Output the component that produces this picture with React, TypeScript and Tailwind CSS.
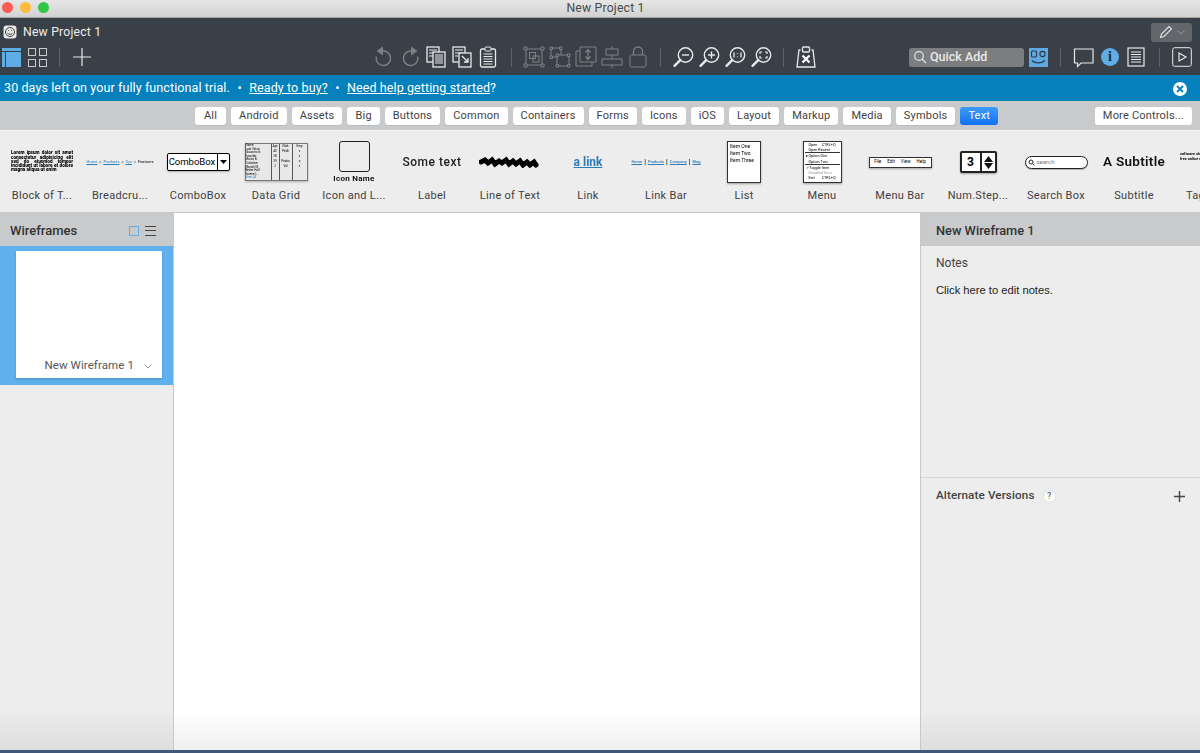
import React from 'react';

const filters = ['All', 'Android', 'Assets', 'Big', 'Buttons', 'Common', 'Containers', 'Forms', 'Icons', 'iOS', 'Layout', 'Markup', 'Media', 'Symbols', 'Text'];

function Svg({ children, w = 24, h = 24, className = '' }: { children: React.ReactNode; w?: number; h?: number; className?: string }) {
  return (
    <svg width={w} height={h} viewBox={`0 0 ${w} ${h}`} fill="none" className={className}>
      {children}
    </svg>
  );
}

const DIM = '#7d8185';
const LIT = '#e8e9ea';

function ToolIcon({ children }: { children: React.ReactNode }) {
  return <div className="w-[26px] h-[24px] flex items-center justify-center shrink-0">{children}</div>;
}

function Sep() {
  return <div className="w-px h-[19px] bg-[#5d6267] shrink-0" />;
}

function Magnifier({ children }: { children?: React.ReactNode }) {
  return (
    <Svg>
      <circle cx="14.5" cy="10" r="7.2" stroke={LIT} strokeWidth="1.4" />
      <path d="M9.2 15.2 3.5 20.8" stroke={LIT} strokeWidth="2.4" strokeLinecap="round" />
      {children}
    </Svg>
  );
}

function CenterTools() {
  return (
    <div className="flex items-center">
      <ToolIcon>
        <Svg>
          <path d="M9 6.5a7.2 7.2 0 1 1-4.6 5" stroke={DIM} strokeWidth="1.4" />
          <path d="M11 1.5v9L4.5 6z" fill={DIM} />
        </Svg>
      </ToolIcon>
      <ToolIcon>
        <Svg>
          <path d="M15 6.5a7.2 7.2 0 1 0 4.6 5" stroke={DIM} strokeWidth="1.4" />
          <path d="M13 1.5v9L19.5 6z" fill={DIM} />
        </Svg>
      </ToolIcon>
      <ToolIcon>
        <Svg>
          <rect x="3" y="2" width="12" height="15" fill="#3a4047" stroke={LIT} strokeWidth="1.3" />
          <path d="M5 5h8M5 8h8M5 11h8" stroke={LIT} />
          <rect x="9" y="7" width="12" height="15" fill="#3a4047" stroke={LIT} strokeWidth="1.3" />
          <path d="M11 10h8M11 12h8M11 14h8M11 16h8M11 18h8" stroke={LIT} />
        </Svg>
      </ToolIcon>
      <ToolIcon>
        <Svg>
          <rect x="3" y="2" width="12" height="15" fill="#3a4047" stroke={LIT} strokeWidth="1.3" />
          <path d="M5 5h8M5 8h8M5 11h3" stroke={LIT} />
          <rect x="9" y="8" width="12" height="14" fill="#3a4047" stroke={LIT} strokeWidth="1.3" />
          <path d="M12 11l6 6M18 13v4h-4" stroke={LIT} strokeWidth="1.3" />
        </Svg>
      </ToolIcon>
      <ToolIcon>
        <Svg>
          <rect x="4.5" y="4" width="15" height="18" rx="1.5" stroke={LIT} strokeWidth="1.3" />
          <rect x="9" y="2" width="6" height="4" rx="1" fill="#3a4047" stroke={LIT} />
          <path d="M7.5 9h9M7.5 11.5h9M7.5 14h9M7.5 16.500h9M7.5 19h9" stroke={LIT} />
        </Svg>
      </ToolIcon>
      <div className="w-[10px]" />
      <Sep />
      <div className="w-[9px]" />
      <ToolIcon>
        <Svg>
          <rect x="4" y="4" width="16" height="16" stroke={DIM} />
          <rect x="7.500" y="7.500" width="6" height="6" stroke={DIM} />
          <rect x="11" y="11" width="6" height="6" stroke={DIM} />
          <path d="M2 2h3v3H2zM19 2h3v3h-3zM2 19h3v3H2zM19 19h3v3h-3z" fill="#3a4047" stroke={DIM} />
        </Svg>
      </ToolIcon>
      <ToolIcon>
        <Svg>
          <rect x="3" y="3" width="10" height="9" stroke={DIM} />
          <rect x="9" y="10" width="12" height="11" fill="#3a4047" stroke={DIM} />
          <path d="M2 2h2.500v2.500H2zM11.500 2H14v2.500h-2.500zM2 11h2.500v2.500H2zM8 9h2.500v2.500H8zM19.500 9H22v2.500h-2.500zM8 19.500h2.500V22H8zM19.500 19.500H22V22h-2.500z" fill="#3a4047" stroke={DIM} />
        </Svg>
      </ToolIcon>
      <ToolIcon>
        <Svg>
          <path d="M6 2h16v15H6z" stroke={DIM} />
          <path d="M6 6H2v15h16v-4" stroke={DIM} />
          <path d="M14 5v9M11.500 7.500 14 4.500l2.500 3M11.500 11.500l2.500 3 2.500-3" stroke={DIM} strokeWidth="1.2" />
        </Svg>
      </ToolIcon>
      <ToolIcon>
        <Svg>
          <path d="M12 1v22" stroke={DIM} />
          <rect x="6" y="4" width="12" height="6" stroke={DIM} fill="#3a4047" />
          <rect x="2" y="14" width="20" height="6" stroke={DIM} fill="#3a4047" />
        </Svg>
      </ToolIcon>
      <ToolIcon>
        <Svg>
          <rect x="4" y="10" width="16" height="12" rx="1.500" stroke={DIM} />
          <path d="M7.500 10V6.500a4.500 4.500 0 0 1 9 0V10" stroke={DIM} strokeWidth="1.300" />
        </Svg>
      </ToolIcon>
      <div className="w-[9px]" />
      <Sep />
      <div className="w-[9px]" />
      <ToolIcon>
        <Magnifier>
          <path d="M11 10h7" stroke={LIT} strokeWidth="1.400" />
        </Magnifier>
      </ToolIcon>
      <ToolIcon>
        <Magnifier>
          <path d="M11 10h7M14.500 6.500v7" stroke={LIT} strokeWidth="1.400" />
        </Magnifier>
      </ToolIcon>
      <ToolIcon>
        <Magnifier>
          <path d="M11 7.500v5M14.500 8v.8M14.500 11.500v.8M18 7.500v5" stroke={LIT} strokeWidth="1.300" />
        </Magnifier>
      </ToolIcon>
      <ToolIcon>
        <Magnifier>
          <path d="M11 9V7h2M16 7h2v2M18 11v2h-2M13 13h-2v-2" stroke={LIT} strokeWidth="1.200" />
        </Magnifier>
      </ToolIcon>
      <div className="w-[9px]" />
      <Sep />
      <div className="w-[9px]" />
      <ToolIcon>
        <Svg>
          <path d="M6.500 5H5L3 22h18L19 5h-1.500" stroke={LIT} strokeWidth="1.300" />
          <rect x="8.500" y="2" width="7" height="5" rx="1" stroke={LIT} strokeWidth="1.300" />
          <path d="m8.500 10.500 7 7M15.500 10.500l-7 7" stroke="#fff" strokeWidth="2.200" />
        </Svg>
      </ToolIcon>
    </div>
  );
}

function RightTools() {
  return (
    <div className="flex items-center">
      <div className="w-[115px] h-[19px] rounded-[3px] bg-[#7b7d7f] flex items-center pl-[4px] gap-[3px]">
        <Svg w={14} h={14}>
          <circle cx="6" cy="6" r="4.300" stroke="#e4e4e4" strokeWidth="1.200" />
          <path d="m9 9 4 4" stroke="#e4e4e4" strokeWidth="1.300" />
        </Svg>
        <span className="text-[12.500px] font-medium text-[#e9e9e9]">Quick Add</span>
      </div>
      <div className="w-[19px] h-[19px] ml-[5px] bg-[#5fa9e0] flex items-center justify-center shrink-0">
        <Svg w={17} h={17}>
          <rect x="1.500" y="2" width="5" height="6" rx="1" stroke="#2a3a4a" strokeWidth="1.100" />
          <circle cx="12.500" cy="5" r="2.600" stroke="#2a3a4a" strokeWidth="1.100" />
          <path d="M2 11.500c3 3 9 3.500 13 0" stroke="#2a3a4a" strokeWidth="1.200" />
        </Svg>
      </div>
      <div className="w-[12px]" />
      <Sep />
      <div className="w-[10px]" />
      <ToolIcon>
        <Svg w={22} h={22}>
          <path d="M1.500 3h18.500v14H8l-3.500 3.500V17H1.500z" stroke={LIT} strokeWidth="1.200" />
        </Svg>
      </ToolIcon>
      <ToolIcon>
        <div className="w-[18px] h-[18px] rounded-full bg-[#5fade6] flex items-center justify-center text-[#1f2a35] text-[14px] font-bold leading-none" style={{ fontFamily: '"Liberation Serif", serif' }}>
          i
        </div>
      </ToolIcon>
      <ToolIcon>
        <Svg w={18} h={20}>
          <rect x="1" y="1" width="16" height="18" stroke={LIT} strokeWidth="1.200" />
          <path d="M4 5h10M4 7.500h10M4 10h10M4 12.500h10M4 15h10" stroke={LIT} />
        </Svg>
      </ToolIcon>
      <div className="w-[10px]" />
      <Sep />
      <div className="w-[12px]" />
      <Svg w={20} h={20}>
        <rect x="0.700" y="0.700" width="18.600" height="18.600" rx="2" stroke={LIT} strokeWidth="1" />
        <path d="M7 6v8l7-4z" stroke={LIT} strokeWidth="1.200" />
      </Svg>
    </div>
  );
}

function Thumb({ label, children }: { label: string; children: React.ReactNode }) {
  return (
    <div className="w-[78px] shrink-0 flex flex-col items-center">
      <div className="h-[52px] w-[78px] flex items-center justify-center">{children}</div>
      <div className="mt-[1px] text-[11px] leading-[14px] text-[#3f3f3f] tracking-[0.3px] whitespace-nowrap">{label}</div>
    </div>
  );
}

function Library() {
  return (
    <div className="h-[83px] bg-[#ededed] border-b border-[#c8c8c8] flex pl-[3px] pt-[5px] overflow-hidden shrink-0 border-t border-t-[#f5f5f5]">
      <Thumb label="Block of T...">
        <div className="w-[62px] text-[4.700px] leading-[4.200px] font-black text-black blur-[0.35px] text-justify">
          Lorem ipsum dolor sit amet consectetur adipisicing elit sed do eiusmod tempor incididunt ut labore et dolore magna aliqua ut enim
        </div>
      </Thumb>
      <Thumb label="Breadcru...">
        <div className="text-[4px] text-black flex gap-[2px] whitespace-nowrap blur-[0.2px]">
          <span className="text-[#2c7cb8] underline">Home</span><span>&gt;</span>
          <span className="text-[#2c7cb8] underline">Products</span><span>&gt;</span>
          <span className="text-[#2c7cb8] underline">Xyz</span><span>&gt;</span>
          <span>Features</span>
        </div>
      </Thumb>
      <Thumb label="ComboBox">
        <div className="w-[63px] h-[18px] bg-white border-[1.500px] border-black rounded-[2px] flex items-center shadow-[0_1px_2px_#0004]">
          <span className="flex-1 text-[9.500px] text-black text-center leading-none whitespace-nowrap">ComboBox</span>
          <div className="w-[12px] h-full border-l-[1.500px] border-black flex items-center justify-center">
            <Svg w={7} h={5}><path d="M0 0h7L3.500 4z" fill="#000" /></Svg>
          </div>
        </div>
      </Thumb>
      <Thumb label="Data Grid">
        <div className="w-[63px] h-[38px] bg-[#e8e8e8] border border-[#777] grid grid-cols-[26px_8px_13px_1fr] blur-[0.3px] shadow-[0_1px_2px_#0004]">
          <div className="border-r border-[#555] text-[3px] leading-[3.600px] text-black whitespace-nowrap">
            Name<br />Last Value<br />Giacomo G.<br />Founder<br />Marco B.<br />Tuttofare<br />Mariah M.<br />Better Half<br />Valerie L.<br /><span className="text-[#2c7cb8]">View All</span>
          </div>
          <div className="border-r border-[#555] text-[3px] text-center leading-[5px] text-black">Age<br />40<br />38<br />39<br />2</div>
          <div className="border-r border-[#555] text-[3px] text-center leading-[5px] text-black">Nick<br />Peldi<br />&nbsp;<br />Patata<br />Val</div>
          <div className="text-[3px] text-center leading-[5px] text-black">Emp<br />x<br />x<br />o<br />x</div>
        </div>
      </Thumb>
      <Thumb label="Icon and L...">
        <div className="flex flex-col items-center">
          <div className="w-[31px] h-[31px] border-[1.500px] border-[#222] rounded-[3px] mb-[2px]" />
          <span className="text-[8px] leading-[10px] text-black font-semibold tracking-[0.3px] whitespace-nowrap blur-[0.2px]">Icon Name</span>
        </div>
      </Thumb>
      <Thumb label="Label">
        <span className="text-[12px] text-[#222] font-medium tracking-[0.5px] whitespace-nowrap blur-[0.35px]">Some text</span>
      </Thumb>
      <Thumb label="Line of Text">
        <Svg w={62} h={12} className="blur-[0.5px]">
          <path d="M2 6 6 4l3 3 4-3 3 4 4-3 3 2 4-3 3 4 4-3 3 3 4-3 3 4 4-3 3 3 4-3 2 3" stroke="#000" strokeWidth="5" strokeLinecap="round" />
        </Svg>
      </Thumb>
      <Thumb label="Link">
        <span className="text-[12px] text-[#2c7cb8] underline font-bold whitespace-nowrap blur-[0.35px]">a link</span>
      </Thumb>
      <Thumb label="Link Bar">
        <div className="text-[4px] text-[#2c7cb8] font-medium whitespace-nowrap flex items-center gap-[2px] blur-[0.2px]">
          <span className="underline">Home</span><span className="text-black text-[7px] leading-none">|</span>
          <span className="underline">Products</span><span className="text-black text-[7px] leading-none">|</span>
          <span className="underline">Company</span><span className="text-black text-[7px] leading-none">|</span>
          <span className="underline">Blog</span>
        </div>
      </Thumb>
      <Thumb label="List">
        <div className="w-[34px] h-[42px] bg-white border border-[#333] shadow-[0_1px_2px_#0005] pl-[2px] text-[5px] leading-[7px] text-black pt-[0.500px] whitespace-nowrap blur-[0.15px]">
          Item One<br />Item Two<br />Item Three
        </div>
      </Thumb>
      <Thumb label="Menu">
        <div className="w-[39px] h-[42px] bg-white border border-[#333] shadow-[0_1px_2px_#0005] text-[3.800px] leading-[5.200px] text-black flex flex-col whitespace-nowrap px-[1px] blur-[0.15px]">
          <div className="flex justify-between px-[4px]"><span>Open</span><span>CTRL+O</span></div>
          <div className="px-[4px] border-b border-[#333]">Open Recent</div>
          <div className="px-[1px]">▸ Option One</div>
          <div className="px-[4px] border-b border-[#333]">Option Two</div>
          <div className="px-[1px]">✓ Toggle Item</div>
          <div className="px-[4px] text-[#999]">Disabled Item</div>
          <div className="flex justify-between px-[4px]"><span>Exit</span><span>CTRL+Q</span></div>
        </div>
      </Thumb>
      <Thumb label="Menu Bar">
        <div className="w-[63px] h-[11px] bg-white border border-[#333] shadow-[0_1px_2px_#0005] text-[4.500px] text-black flex items-center justify-center gap-[6px] whitespace-nowrap">
          <span>File</span><span>Edit</span><span>View</span><span>Help</span>
        </div>
      </Thumb>
      <Thumb label="Num.Step...">
        <div className="w-[37px] h-[22px] bg-white border-2 border-[#222] rounded-[2px] flex shadow-[0_1px_2px_#0005]">
          <div className="flex-1 text-[12px] font-bold leading-[18px] text-center text-black">3</div>
          <div className="w-[15px] border-l-2 border-[#222] flex flex-col items-center justify-center gap-[1px]">
            <Svg w={9} h={6}><path d="M0 6h9L4.500 0z" fill="#111" /></Svg>
            <Svg w={9} h={6}><path d="M0 0h9L4.500 6z" fill="#111" /></Svg>
          </div>
        </div>
      </Thumb>
      <Thumb label="Search Box">
        <div className="w-[63px] h-[13px] bg-white border-[1.500px] border-[#222] rounded-full flex items-center pl-[2px] gap-[2px] shadow-[0_1px_1px_#0004]">
          <Svg w={7} h={7}><circle cx="3" cy="3" r="2" stroke="#222" /><path d="m4.500 4.500 2 2" stroke="#222" /></Svg>
          <span className="text-[6px] text-[#777] leading-none">search</span>
        </div>
      </Thumb>
      <Thumb label="Subtitle">
        <span className="text-[13.500px] font-semibold text-[#111] tracking-[0.3px] whitespace-nowrap blur-[0.25px] mb-[2px]">A Subtitle</span>
      </Thumb>
      <Thumb label="Tag Cloud">
        <div className="w-[64px] h-[20px] text-[3.800px] leading-[4.500px] text-black font-bold blur-[0.2px]">
          software sharing social network web free online mobile web 2.0 apps tools
        </div>
      </Thumb>
    </div>
  );
}

export default function App() {
  return (
    <div className="w-[1200px] h-[753px] overflow-hidden flex flex-col bg-white" style={{ fontFamily: 'Roboto, "Liberation Sans", sans-serif' }}>
      {/* window title */}
      <div className="h-[18px] shrink-0 relative bg-gradient-to-b from-[#e6e6e6] to-[#d2d2d2] border-b border-[#a5a5a5] flex items-center justify-center pl-[11px]">
        <div className="absolute left-[2px] top-[2px] flex gap-[7px]">
          <div className="w-[11px] h-[11px] rounded-full bg-[#fc5b57]" />
          <div className="w-[11px] h-[11px] rounded-full bg-[#fdbb3e]" />
          <div className="w-[11px] h-[11px] rounded-full bg-[#33c748]" />
        </div>
        <span className="text-[12.200px] leading-none text-[#4a4a4a] tracking-[0.2px]">New Project 1</span>
      </div>

      {/* dark toolbar */}
      <div className="h-[57px] shrink-0 bg-[#3a4047] flex flex-col">
        <div className="h-[27px] flex items-center pl-[3px] pr-[8px] pt-[1px]">
          <Svg w={14} h={14}>
            <rect x="0.500" y="0.500" width="13" height="13" rx="3" fill="#e8e8e8" />
            <circle cx="7" cy="7" r="4.500" stroke="#444" />
            <path d="M4.500 8.200c1.200 1.400 3.800 1.400 5 0" stroke="#444" />
            <path d="M5 5.500h.8M8.200 5.500H9" stroke="#444" />
          </Svg>
          <span className="ml-[6px] text-[12.200px] text-[#eceded] tracking-[0.2px]">New Project 1</span>
          <div className="ml-auto w-[41px] h-[19px] rounded-[3px] bg-[#63676b] flex items-center pl-[8px] gap-[4px]">
            <Svg w={14} h={14}>
              <path d="M1.500 12.500 2.500 9 10 1.500l2.500 2.500L5 11.500z" stroke="#e4e4e4" strokeWidth="1.100" />
            </Svg>
            <Svg w={8} h={5}><path d="m.5.500 3.500 3.500L7.500.500" stroke="#9a9c9e" /></Svg>
          </div>
        </div>
        <div className="flex items-center h-[24px] pl-[2px]">
          <div className="w-[19px] h-[19px] bg-[#5fade6] flex flex-col shrink-0">
            <div className="h-[4px] border-b border-[#3a4047]" />
            <div className="flex-1 flex">
              <div className="w-[4px] border-r border-[#3a4047]" />
            </div>
          </div>
          <div className="ml-[7px] w-[19px] h-[19px] grid grid-cols-2 gap-[3px] shrink-0">
            {[0, 1, 2, 3].map((i) => (
              <div key={i} className="border border-[#c9cacb]" />
            ))}
          </div>
          <div className="ml-[12px] mr-[13px]"><Sep /></div>
          <Svg w={18} h={18}>
            <path d="M9 0v18M0 9h18" stroke={LIT} strokeWidth="1.200" />
          </Svg>
          <div className="ml-[280px]"><CenterTools /></div>
          <div className="ml-[90px]"><RightTools /></div>
        </div>
      </div>

      {/* trial banner */}
      <div className="h-[26px] shrink-0 bg-[#0480bc] text-white text-[12.500px] flex items-center pl-[4px] pr-[13px] pt-[1px] whitespace-nowrap tracking-[0.1px]">
        <span>30 days left on your fully functional trial.</span>
        <span className="mx-[7.500px]">•</span>
        <span className="underline">Ready to buy?</span>
        <span className="mx-[7.500px]">•</span>
        <span><span className="underline">Need help getting started</span>?</span>
        <div className="ml-auto w-[14px] h-[14px] rounded-full bg-white flex items-center justify-center">
          <Svg w={8} h={8}><path d="m1 1 6 6M7 1 1 7" stroke="#0480bc" strokeWidth="1.800" /></Svg>
        </div>
      </div>

      {/* filter row */}
      <div className="h-[29px] shrink-0 bg-[#c9cacc] flex items-center pl-[195px] pr-[8px]">
        <div className="flex gap-[5px]">
          {filters.map((f) =>
            f === 'Text' ? (
              <div key={f} className="h-[18px] px-[8px] rounded-[3px] bg-gradient-to-b from-[#3d9bfb] to-[#0f6ff0] text-white text-[11px] leading-[18px] tracking-[0.2px]">{f}</div>
            ) : (
              <div key={f} className="h-[18px] min-w-[31px] text-center px-[8px] rounded-[3px] bg-white text-[#3f3f3f] text-[11px] leading-[18px] tracking-[0.2px] shadow-[0_0.5px_0.5px_#0002]">{f}</div>
            )
          )}
        </div>
        <div className="ml-auto h-[18px] w-[97px] text-center rounded-[3px] bg-white text-[#3f3f3f] text-[11px] leading-[18px] tracking-[0.2px]">More Controls...</div>
      </div>

      <Library />

      {/* main panels */}
      <div className="flex-1 min-h-0 flex border-b-[3px] border-[#41577a]">
        <div className="w-[174px] shrink-0 border-r border-[#c8c8c8] bg-[linear-gradient(to_bottom,#ededed_92%,#dedede_100%)] flex flex-col">
          <div className="h-[33px] shrink-0 bg-[#c9cacc] flex items-center pl-[10px] pr-[17px] pt-[2px]">
            <span className="text-[13px] font-medium text-[#333]">Wireframes</span>
            <div className="ml-auto w-[10px] h-[10px] border border-[#62aee8]" />
            <div className="ml-[6px] w-[11px] h-[10px] flex flex-col justify-between">
              <div className="h-px bg-[#444]" />
              <div className="h-px bg-[#444]" />
              <div className="h-px bg-[#444]" />
            </div>
          </div>
          <div className="h-[139px] shrink-0 bg-[#5fb0ec] pl-[16px] pr-[11px] pt-[5px]">
            <div className="h-[127px] bg-white shadow-[0_1px_2px_#0003] flex items-end justify-end pr-[10px] pb-[4px]">
              <span className="text-[11.500px] text-[#555] tracking-[0.1px]">New Wireframe 1</span>
              <Svg w={8} h={5} className="ml-[10px] mb-[5px]"><path d="m.5.500 3.500 3.500L7.500.500" stroke="#999" /></Svg>
            </div>
          </div>
        </div>

        <div className="flex-1 bg-[linear-gradient(to_bottom,#fff_93%,#efefef_100%)]" />

        <div className="w-[280px] shrink-0 border-l border-[#c8c8c8] bg-[linear-gradient(to_bottom,#ededed_92%,#dedede_100%)] flex flex-col">
          <div className="h-[33px] shrink-0 bg-[#c9cacc] flex items-center pl-[15px] pt-[2px]">
            <span className="text-[12.800px] font-medium text-[#333]">New Wireframe 1</span>
          </div>
          <div className="h-[232px] shrink-0 border-b border-[#d6d6d6] pl-[15px] pt-[10px]">
            <div className="text-[12px] leading-[14px] text-[#444]">Notes</div>
            <div className="mt-[13px] text-[11.200px] leading-[14px] text-[#222]" style={{ fontFamily: '"Liberation Sans", sans-serif' }}>Click here to edit notes.</div>
          </div>
          <div className="h-[36px] shrink-0 flex items-center pl-[15px] pr-[15px]">
            <span className="text-[11.700px] font-medium text-[#444] tracking-[0.1px]">Alternate Versions</span>
            <div className="ml-[8px] w-[13px] h-[13px] rounded-full bg-white border border-[#ddd] text-[9px] leading-[11px] text-center text-[#444]">?</div>
            <Svg w={11} h={11} className="ml-auto">
              <path d="M5.500 0v11M0 5.500h11" stroke="#444" strokeWidth="1.400" />
            </Svg>
          </div>
        </div>
      </div>
    </div>
  );
}
